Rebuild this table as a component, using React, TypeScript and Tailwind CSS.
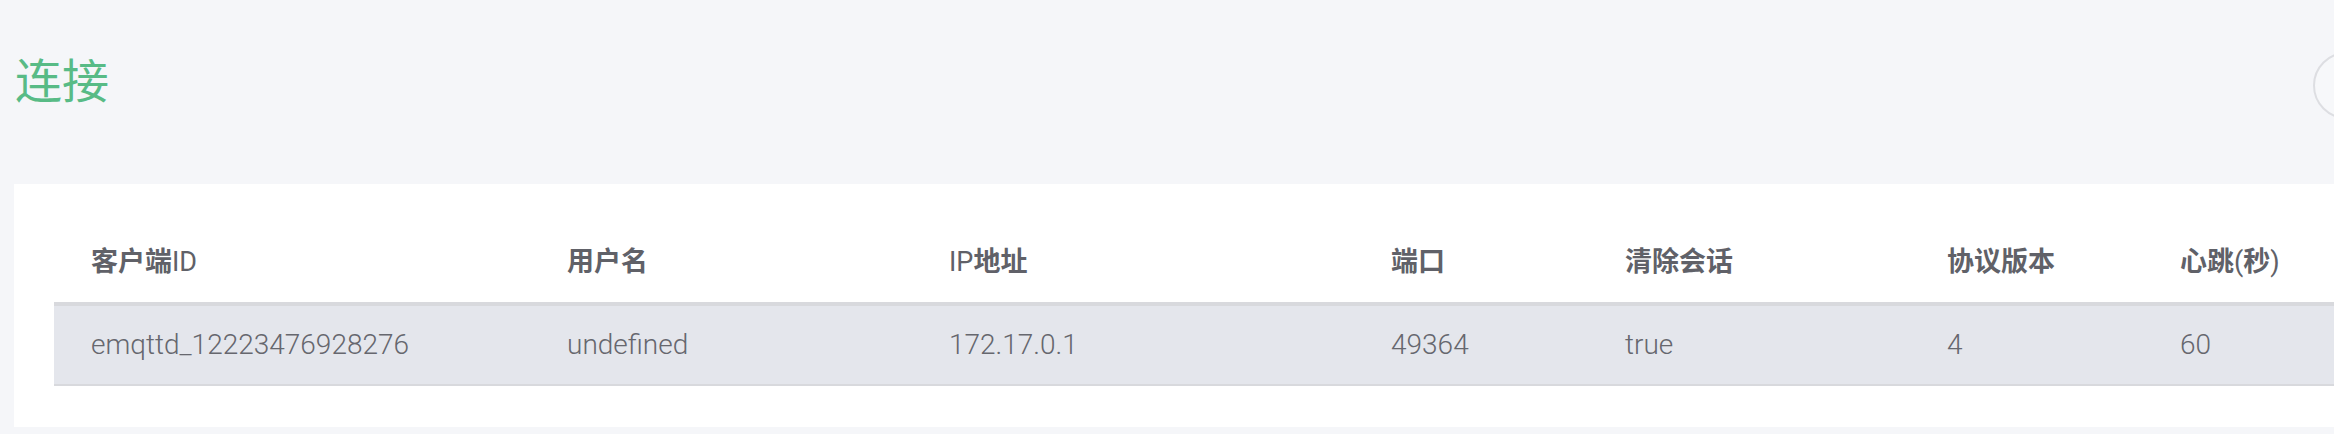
const columns = [
  { key: "clientId", width: "w-[476px]", label: <>客户端<span className="font-normal">ID</span></> },
  { key: "username", width: "w-[382px]", label: <>用户名</> },
  { key: "ip", width: "w-[442px]", label: <><span className="font-normal">IP</span>地址</> },
  { key: "port", width: "w-[234px]", label: <>端口</> },
  { key: "clean", width: "w-[322px]", label: <>清除会话</> },
  { key: "proto", width: "w-[233px]", label: <>协议版本</> },
  { key: "keepalive", width: "w-[300px]", label: <>心跳<span className="font-normal">(</span>秒<span className="font-normal">)</span></> },
];

const rows = [
  {
    clientId: "emqttd_12223476928276",
    username: "undefined",
    ip: "172.17.0.1",
    port: "49364",
    clean: "true",
    proto: "4",
    keepalive: "60",
  },
];

const font = "font-['Roboto','Noto_Sans_CJK_SC',sans-serif]";

export default function App() {
  return (
    <div className={`h-[434px] w-[2334px] overflow-hidden bg-[#f5f6f9] ${font}`}>
      {/* page header */}
      <div className="flex h-[184px] items-start justify-between pl-[15px] pt-[52px]">
        <h1 className="text-[47px] font-normal leading-[60px] text-[#58bb86]">连接</h1>
        <div className="-mr-[46px] h-[67px] w-[67px] shrink-0 rounded-full border-2 border-[#dddee2] bg-[#f7f8fa]" />
      </div>

      {/* connections card */}
      <div className="ml-[14px] w-[2400px] bg-white px-[40px] pb-[41px] pt-[58px]">
        <div className="flex border-b-4 border-[#d8d9dd]">
          {columns.map((c) => (
            <div
              key={c.key}
              className={`${c.width} shrink-0 pb-[20px] pl-[37px] text-[27px] font-semibold leading-[40px] text-[#606168]`}
            >
              {c.label}
            </div>
          ))}
        </div>
        {rows.map((r) => (
          <div key={r.clientId} className="flex h-[80px] items-center border-b-2 border-[#d8d9dd] bg-[#e4e6ec]">
            {columns.map((c) => (
              <div
                key={c.key}
                className={`${c.width} shrink-0 pl-[37px] text-[28px] font-light leading-[40px] text-[#66676e]`}
              >
                {r[c.key as keyof typeof r]}
              </div>
            ))}
          </div>
        ))}
      </div>
    </div>
  );
}
